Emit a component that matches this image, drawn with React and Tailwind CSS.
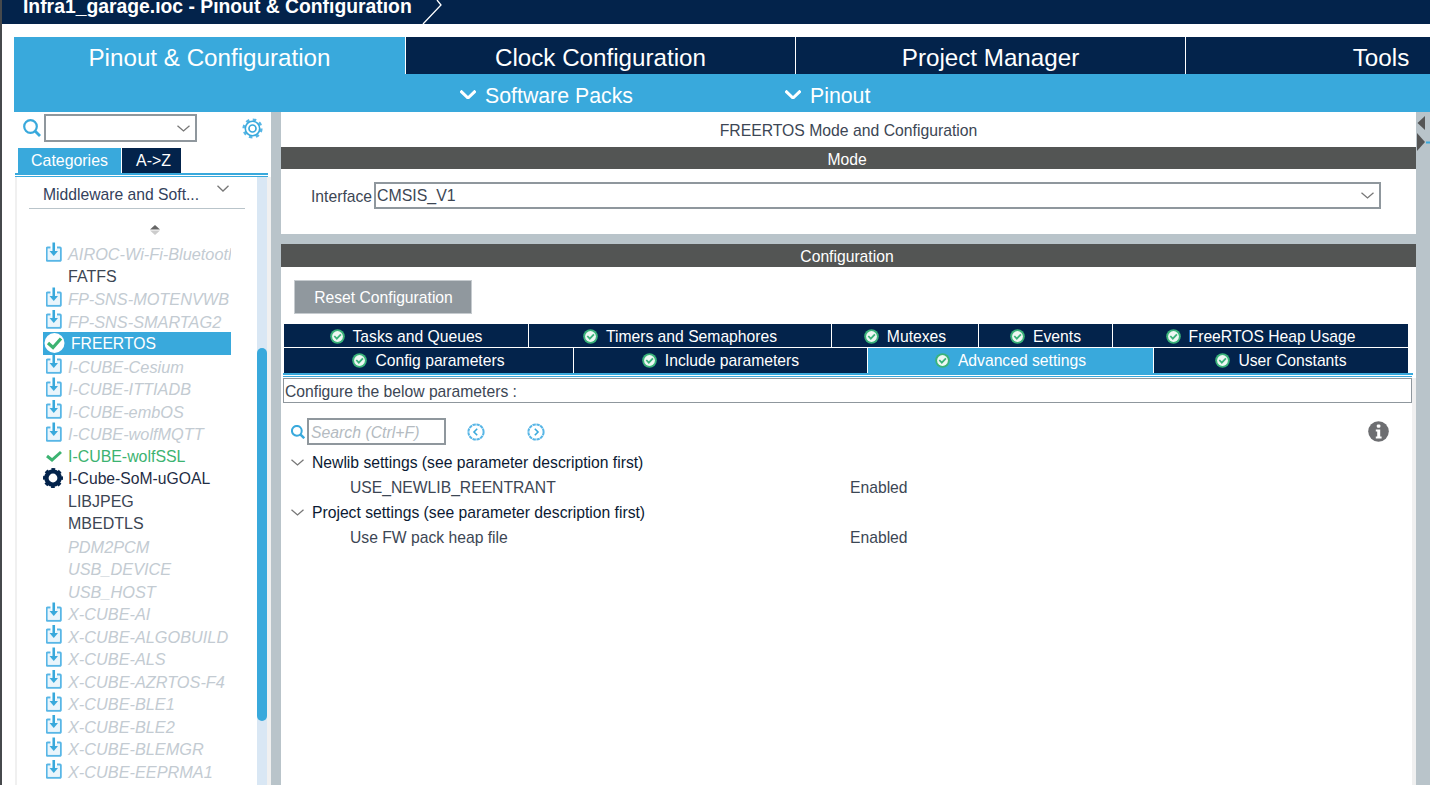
import React from 'react';

const PACKS = [
  { name: 'AIROC-Wi-Fi-Bluetootl', kind: 'dl' },
  { name: 'FATFS', kind: 'plain' },
  { name: 'FP-SNS-MOTENVWB', kind: 'dl' },
  { name: 'FP-SNS-SMARTAG2', kind: 'dl' },
  { name: 'FREERTOS', kind: 'selected' },
  { name: 'I-CUBE-Cesium', kind: 'dl' },
  { name: 'I-CUBE-ITTIADB', kind: 'dl' },
  { name: 'I-CUBE-embOS', kind: 'dl' },
  { name: 'I-CUBE-wolfMQTT', kind: 'dl' },
  { name: 'I-CUBE-wolfSSL', kind: 'ok' },
  { name: 'I-Cube-SoM-uGOAL', kind: 'gear' },
  { name: 'LIBJPEG', kind: 'plain' },
  { name: 'MBEDTLS', kind: 'plain' },
  { name: 'PDM2PCM', kind: 'off' },
  { name: 'USB_DEVICE', kind: 'off' },
  { name: 'USB_HOST', kind: 'off' },
  { name: 'X-CUBE-AI', kind: 'dl' },
  { name: 'X-CUBE-ALGOBUILD', kind: 'dl' },
  { name: 'X-CUBE-ALS', kind: 'dl' },
  { name: 'X-CUBE-AZRTOS-F4', kind: 'dl' },
  { name: 'X-CUBE-BLE1', kind: 'dl' },
  { name: 'X-CUBE-BLE2', kind: 'dl' },
  { name: 'X-CUBE-BLEMGR', kind: 'dl' },
  { name: 'X-CUBE-EEPRMA1', kind: 'dl' },
];

const ROW1 = [
  { label: 'Tasks and Queues', w: 'w-[245px]' },
  { label: 'Timers and Semaphores', w: 'w-[303px]' },
  { label: 'Mutexes', w: 'w-[147px]' },
  { label: 'Events', w: 'w-[134px]' },
  { label: 'FreeRTOS Heap Usage', w: 'w-[295px]' },
];

const ROW2 = [
  { label: 'Config parameters', w: 'w-[290px]' },
  { label: 'Include parameters', w: 'w-[294px]' },
  { label: 'Advanced settings', w: 'w-[286px]', active: true },
  { label: 'User Constants', w: 'w-[254px]' },
];

const Chevron = ({ w = 12, h = 7, color = '#777', sw = 1.3, className = '' }) => (
  <svg width={w} height={h} viewBox={`0 0 ${w} ${h}`} className={`shrink-0 ${className}`}>
    <path d={`M0.5 0.8L${w / 2} ${h - 1}L${w - 0.5} 0.8`} fill="none" stroke={color} strokeWidth={sw} />
  </svg>
);

const Glass = ({ size = 18, sw = 2.2, className = '' }) => (
  <svg width={size} height={size} viewBox="0 0 18 18" className={`shrink-0 ${className}`}>
    <circle cx="7.5" cy="7.5" r="6.3" fill="none" stroke="#39a9dc" strokeWidth={sw} />
    <path d="M12 12L17 17" stroke="#39a9dc" strokeWidth={sw + 0.6} />
  </svg>
);

const DownloadIcon = () => (
  <svg width="16" height="20" viewBox="0 0 16 20" fill="none" className="-mt-[3px]">
    <path d="M4.5 5.5H1.5a0.8 0.8 0 0 0-0.8 0.8V18a0.8 0.8 0 0 0 0.8 0.8H14a0.8 0.8 0 0 0 0.8-0.8V6.3a0.8 0.8 0 0 0-0.8-0.8H11" stroke="#58b6e6" strokeWidth="1.9" />
    <path d="M2 7H5.5V10.5H10V7H13.5V17.5H2Z" fill="#eaf5fc" />
    <path d="M7.75 0.5V10" stroke="#39a9dc" strokeWidth="2.6" />
    <path d="M3.5 9H12L7.75 14Z" fill="#39a9dc" />
  </svg>
);

const TabCheck = () => (
  <svg width="15" height="15" viewBox="0 0 15 15" className="shrink-0">
    <circle cx="7.5" cy="7.5" r="7.3" fill="#3bb37a" />
    <circle cx="7.5" cy="7.5" r="5.4" fill="#eef8f3" />
    <path d="M4.3 7L6.8 9.6L10.9 5.4" fill="none" stroke="#3bb37a" strokeWidth="1.8" />
  </svg>
);

const GearOutline = ({ className = '' }) => (
  <svg width="21" height="21" viewBox="0 0 21 21" className={`shrink-0 ${className}`}>
    <circle cx="10.5" cy="10.5" r="8.9" fill="none" stroke="#58b6e6" strokeWidth="2.4" strokeDasharray="3.5 3.49" />
    <circle cx="10.5" cy="10.5" r="7.2" fill="none" stroke="#39a9dc" strokeWidth="1.6" />
    <circle cx="10.5" cy="10.5" r="3.5" fill="none" stroke="#39a9dc" strokeWidth="1.7" />
  </svg>
);

const SolidGear = () => (
  <svg width="20" height="20" viewBox="0 0 20 20" className="shrink-0">
    <circle cx="10" cy="10" r="6.6" fill="none" stroke="#03234b" strokeWidth="4.4" />
    <circle cx="10" cy="10" r="8.4" fill="none" stroke="#03234b" strokeWidth="3.2" strokeDasharray="3.6 3" strokeDashoffset="1.8" />
  </svg>
);

const NavArrow = ({ d, className = '' }) => (
  <svg width="18" height="18" viewBox="0 0 18 18" className={`shrink-0 ${className}`}>
    <circle cx="9" cy="9" r="7.6" fill="none" stroke="#58b6e6" strokeWidth="2" strokeDasharray="3.4 0.6" />
    <path d={d} fill="none" stroke="#39a9dc" strokeWidth="1.6" />
  </svg>
);

const InfoDot = ({ className = '' }) => (
  <svg width="21" height="21" viewBox="0 0 21 21" className={`shrink-0 ${className}`}>
    <circle cx="10.5" cy="10.5" r="10.3" fill="#6d6e71" />
    <rect x="8.8" y="3.4" width="3.6" height="3.4" rx="1.2" fill="#ffffff" />
    <path d="M7.8 8.4H12.2V15.4H13.6V17.4H7.8V15.4H9.2V10.4H7.8Z" fill="#ffffff" />
  </svg>
);

function PackIcon({ kind }) {
  if (kind === 'dl') return <div className="ml-[3px]"><DownloadIcon /></div>;
  if (kind === 'ok') {
    return (
      <svg width="16" height="12" viewBox="0 0 16 12" className="ml-[3px]">
        <path d="M1 6L6 10L15 2" fill="none" stroke="#3cb371" strokeWidth="3" />
      </svg>
    );
  }
  if (kind === 'gear') return <SolidGear />;
  if (kind === 'selected') {
    return (
      <svg width="21" height="20" viewBox="0 0 21 20" className="ml-[1px]">
        <circle cx="10.5" cy="10" r="10" fill="#ffffff" />
        <path d="M4 10L9 14.5L17 5.5" fill="none" stroke="#3cb371" strokeWidth="3.2" />
      </svg>
    );
  }
  return null;
}

function PackRow({ pack }) {
  const textClass = {
    dl: 'italic text-[#c3cbd2] text-[16.3px] ml-[25px]',
    off: 'italic text-[#c3cbd2] text-[16.3px] ml-[25px]',
    plain: 'text-[#3c4654] text-[16px] ml-[25px]',
    ok: 'text-[#3cb371] text-[15.9px] ml-[25px]',
    gear: 'text-[#1f2d44] text-[15.7px] ml-[25px]',
    selected: 'text-white text-[15.7px] ml-[28px]',
  }[pack.kind];

  return (
    <div className={`relative flex items-center h-[22.5px] w-[188px] overflow-hidden ${pack.kind === 'selected' ? 'bg-[#39a9dc]' : ''}`}>
      <div className="absolute left-0 top-0 h-full flex items-center">
        <PackIcon kind={pack.kind} />
      </div>
      <span className={`whitespace-nowrap pt-[2px] leading-[20px] ${textClass}`}>{pack.name}</span>
    </div>
  );
}

function ConfigTab({ tab, extra = '' }) {
  return (
    <div className={`${tab.w} h-full flex items-center justify-center gap-[8px] border-r border-white last:border-r-0 text-white text-[15.7px] ${extra} ${tab.active ? 'bg-[#39a9dc]' : 'bg-[#03234b]'}`}>
      <TabCheck />
      <span className="whitespace-nowrap">{tab.label}</span>
    </div>
  );
}

export default function App() {
  return (
    <div className="w-[1430px] h-[785px] overflow-hidden bg-white border-l-2 border-[#46494c] font-['Liberation_Sans',Arial,sans-serif]">
      {/* title bar */}
      <div className="h-[24px] bg-[#03234b] flex items-start overflow-hidden">
        <span className="ml-[21px] -mt-[5px] text-white font-bold text-[19.33px] whitespace-nowrap leading-[24px]">Infra1_garage.ioc - Pinout &amp; Configuration</span>
        <svg width="24" height="24" viewBox="0 0 24 24" className="ml-[8px] shrink-0">
          <path d="M17 0L21 5L3 24" fill="none" stroke="#ffffff" strokeWidth="1.3" />
        </svg>
      </div>

      {/* main tabs */}
      <div className="h-[13px]" />
      <div className="ml-[12px] h-[37px] flex overflow-hidden text-[24.2px]">
        <div className="w-[392px] shrink-0 bg-[#39a9dc] text-white flex items-center justify-center border-r border-white pt-[6px]">Pinout &amp; Configuration</div>
        <div className="w-[390px] shrink-0 bg-[#03234b] text-white flex items-center justify-center border-r border-white pt-[6px]">Clock Configuration</div>
        <div className="w-[390px] shrink-0 bg-[#03234b] text-white flex items-center justify-center border-r border-white pt-[6px]">Project Manager</div>
        <div className="w-[390px] shrink-0 bg-[#03234b] text-white flex items-center justify-center pt-[6px]">Tools</div>
      </div>

      {/* sub menu */}
      <div className="ml-[12px] h-[38px] bg-[#39a9dc] text-white text-[21.3px] flex items-center pt-[7px]">
        <div className="ml-[446px] flex items-center gap-[9px]">
          <Chevron w={16} h={9} color="#ffffff" sw={3} className="-mt-[5px]" />
          <span>Software Packs</span>
        </div>
        <div className="ml-[152px] flex items-center gap-[9px]">
          <Chevron w={16} h={9} color="#ffffff" sw={3} className="-mt-[5px]" />
          <span>Pinout</span>
        </div>
      </div>

      <div className="ml-[12px] flex h-[673px]">
        {/* left panel */}
        <aside className="w-[257px] shrink-0 overflow-hidden flex flex-col">
          <div className="h-[32px] flex items-center">
            <Glass size={18} className="ml-[9px] -mt-[1px]" />
            <div className="ml-[3px] w-[153px] h-[28px] border-2 border-[#8f979d] flex items-center justify-end pr-[5px]">
              <Chevron w={13} h={7} />
            </div>
            <GearOutline className="ml-[45px]" />
          </div>
          <div className="h-[25px] mt-[4px] ml-[4px] flex gap-[1px] text-[15.9px] text-white">
            <div className="w-[103px] bg-[#39a9dc] flex items-center justify-center">Categories</div>
            <div className="w-[59px] bg-[#03234b] flex items-center justify-center pl-[4px]">A-&gt;Z</div>
          </div>
          <div className="h-[2px] bg-[#39a9dc] ml-[1px] mr-[3px]" />
          <div className="h-[1px]" />
          <div className="h-[1px] bg-[#39a9dc] ml-[1px] mr-[3px]" />
          <div className="flex-1 flex min-h-0 ml-[1px] bg-[#f0f0f0] pl-[2px]">
            <div className="w-[240px] bg-white overflow-hidden shrink-0">
              <div className="mx-[12px] h-[32px] pt-[6px] pl-[14px] border-b border-[#b9c4ca] flex items-start justify-between text-[15.7px] text-[#33415c]">
                <span className="whitespace-nowrap">Middleware and Soft...</span>
                <Chevron w={12} h={7} className="mr-[16px] mt-[2px]" />
              </div>
              <div className="h-[33px] pt-[15px] pl-[132px]">
                <svg width="12" height="12" viewBox="0 0 12 12" className="block">
                  <path d="M6 1L11 5.5H1Z" fill="#666" />
                  <path d="M6 11L11 6.5H1Z" fill="#ccc" />
                </svg>
              </div>
              <div className="pl-[26px]">
                {PACKS.map(p => <PackRow key={p.name} pack={p} />)}
              </div>
            </div>
            <div className="w-[10px] shrink-0 bg-[#d9e7f4] flex flex-col">
              <div className="h-[171px] shrink-0" />
              <div className="h-[373px] shrink-0 bg-[#39a9dc] rounded-full" />
            </div>
          </div>
        </aside>

        {/* splitter */}
        <div className="w-[10px] shrink-0 bg-[#b9c4ca]" />

        {/* right panel */}
        <main className="w-[1135px] shrink-0 flex flex-col">
          <div className="h-[35px] pt-[3px] flex items-center justify-center text-[15.75px] text-[#3c4654]">FREERTOS Mode and Configuration</div>
          <div className="h-[22px] bg-[#535554] text-white text-[15.7px] flex items-center justify-center pt-[3px] pr-[3px]">Mode</div>
          <div className="h-[65px] flex items-start pt-[13px]">
            <span className="ml-[30px] w-[63px] h-[27px] pt-[2px] flex items-center text-[15.7px] text-[#3c4654]">Interface</span>
            <div className="w-[1007px] h-[27px] border-2 border-[#8f979d] flex items-center justify-between pl-[1px] pr-[5px] text-[15.9px] text-[#3c4654]">
              <span className="pt-[1px]">CMSIS_V1</span>
              <Chevron w={13} h={7} />
            </div>
          </div>
          <div className="h-[10px] bg-[#b9c4ca]" />
          <div className="h-[23px] bg-[#535554] text-white text-[15.7px] flex items-center justify-center pt-[3px] pr-[3px]">Configuration</div>

          <div className="h-[13px]" />
          <button className="ml-[13px] w-[178px] h-[34px] bg-[#90989e] border border-[#c6cbcf] text-white text-[15.7px] flex items-center justify-center pt-[1px] pl-[1px]">Reset Configuration</button>
          <div className="h-[10px]" />

          <div className="ml-[3px] w-[1124px] h-[24px] flex border-b border-white">
            {ROW1.map(t => <ConfigTab key={t.label} tab={t} extra="pt-[2px]" />)}
          </div>
          <div className="ml-[3px] w-[1124px] h-[25px] flex">
            {ROW2.map(t => <ConfigTab key={t.label} tab={t} />)}
          </div>
          <div className="ml-[2px] w-[1130px] h-[2px] bg-[#39a9dc]" />
          <div className="h-[1px]" />
          <div className="ml-[2px] w-[1129px] h-[1px] bg-[#39a9dc]" />
          <div className="h-[1px]" />

          <div className="flex-1 flex min-h-0">
            <div className="w-[1131px] shrink-0">
              <div className="ml-[2px] w-[1129px] h-[25px] border border-[#8f979d] flex items-center pl-[1px] pt-[2px] text-[15.7px] text-[#3c4654]">Configure the below parameters :</div>
              <div className="h-[15px]" />
              <div className="flex items-center h-[27px]">
                <Glass size={14} sw={2.6} className="ml-[10px]" />
                <div className="ml-[2px] w-[139px] h-[27px] border-2 border-[#8f979d] flex items-center pl-[2px] pt-[2px] italic text-[15.8px] text-[#b4bbc1]">Search (Ctrl+F)</div>
                <NavArrow d="M10.2 5.8L7 9L10.2 12.2" className="ml-[21px]" />
                <NavArrow d="M7.8 5.8L11 9L7.8 12.2" className="ml-[42px]" />
                <InfoDot className="ml-[823px]" />
              </div>
              <div className="h-[5px]" />
              <div className="h-[25px] flex items-center text-[15.7px] text-[#0b1a33]">
                <Chevron w={13} h={7} className="ml-[10px] mr-[8px]" />
                <span>Newlib settings (see parameter description first)</span>
              </div>
              <div className="h-[25px] flex items-center text-[15.7px] text-[#3c4654]">
                <span className="ml-[69px] w-[500px]">USE_NEWLIB_REENTRANT</span>
                <span>Enabled</span>
              </div>
              <div className="h-[25px] flex items-center text-[15.7px] text-[#0b1a33]">
                <Chevron w={13} h={7} className="ml-[10px] mr-[8px]" />
                <span>Project settings (see parameter description first)</span>
              </div>
              <div className="h-[25px] flex items-center text-[15.7px] text-[#3c4654]">
                <span className="ml-[69px] w-[500px]">Use FW pack heap file</span>
                <span>Enabled</span>
              </div>
            </div>
            <div className="w-[4px] shrink-0 bg-[#f0f0f0]" />
          </div>
        </main>

        {/* collapse strip */}
        <div className="w-[14px] shrink-0 bg-[#b9c4ca] relative">
          <svg width="14" height="48" viewBox="0 0 14 48" className="absolute top-0 left-0">
            <path d="M9 4V18L1.5 11Z" fill="#555" />
            <path d="M1 21V39L9 30Z" fill="#555" />
            <path d="M10 29.5H14V31.5H10Z" fill="#39a9dc" />
          </svg>
        </div>
      </div>
    </div>
  );
}
